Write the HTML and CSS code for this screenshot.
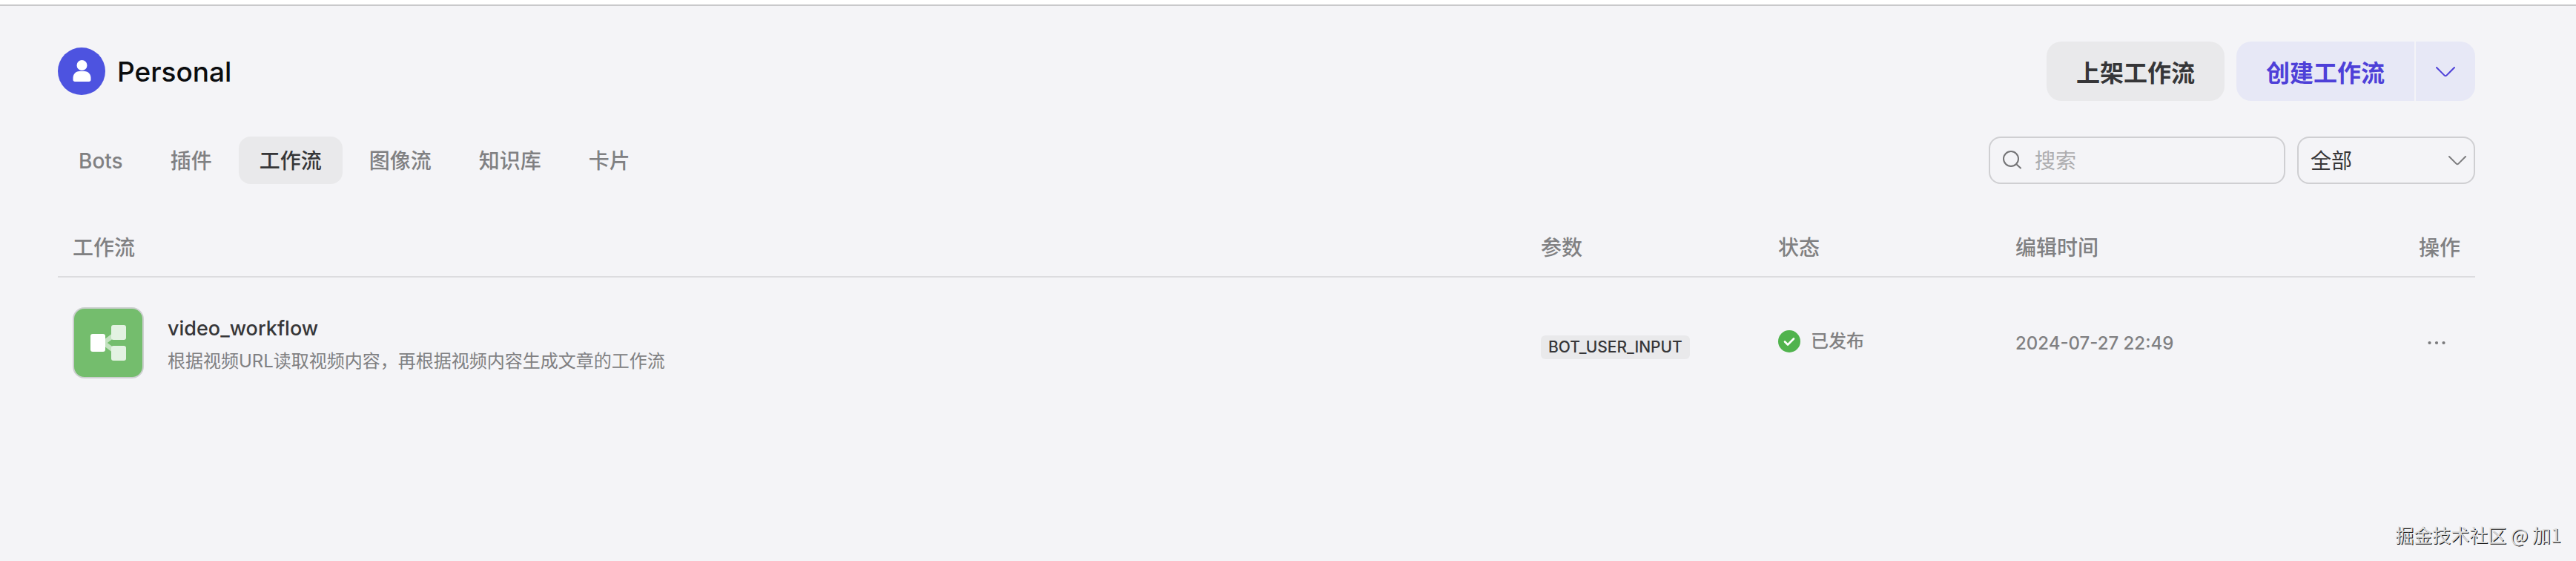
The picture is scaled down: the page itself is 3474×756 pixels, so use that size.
FILE: index.html
```html
<!DOCTYPE html>
<html lang="zh-CN">
<head>
<meta charset="utf-8">
<title>Personal - 工作流</title>
<link rel="stylesheet" href="styles.css">
</head>
<body>
<main class="page">
  <header class="header">
    <div class="space">
      <svg class="avatar" viewBox="0 0 64 64" aria-hidden="true">
        <circle cx="32" cy="32" r="32" fill="#4d53e0"/>
        <circle cx="32.500" cy="24" r="7" fill="#fff"/>
        <path d="M20.500 41c0-5 3.500-9 8.500-9h7c5 0 8.500 4 8.500 9v2.500c0 1.500-1 2.500-2.500 2.500h-19c-1.500 0-2.500-1-2.500-2.500z" fill="#fff"/>
      </svg>
      <h1 class="title">Personal</h1>
    </div>
    <div class="actions">
      <button class="btn btn-gray" type="button">上架工作流</button>
      <div class="split">
        <button class="btn btn-brand" type="button">创建工作流</button>
        <button class="btn btn-brand btn-more" type="button" aria-label="更多">
          <svg class="chevron" viewBox="0 0 32 32" aria-hidden="true"><path d="M4 11l10.600 10.600a2 2 0 0 0 2.800 0L28 11"/></svg>
        </button>
      </div>
    </div>
  </header>

  <div class="toolbar">
    <nav class="tabs">
      <a class="tab" href="#bots">Bots</a>
      <a class="tab" href="#plugins">插件</a>
      <a class="tab tab-active" href="#workflow" aria-current="page">工作流</a>
      <a class="tab" href="#imageflow">图像流</a>
      <a class="tab" href="#knowledge">知识库</a>
      <a class="tab" href="#cards">卡片</a>
    </nav>
    <div class="filters">
      <label class="search">
        <svg class="search-icon" viewBox="0 0 32 32" aria-hidden="true"><circle cx="14" cy="14" r="10"/><path d="M21.500 21.500l5.500 5"/></svg>
        <input class="search-input" type="search" placeholder="搜索" aria-label="搜索">
      </label>
      <div class="select">
        <select class="select-input" aria-label="状态筛选"><option>全部</option></select>
        <svg class="select-arrow" viewBox="0 0 32 32" aria-hidden="true"><path d="M5 11l9.600 9.600a2 2 0 0 0 2.800 0L27 11"/></svg>
      </div>
    </div>
  </div>

  <table class="table">
    <colgroup>
      <col><col class="col-side"><col class="col-side"><col class="col-side"><col class="col-side">
    </colgroup>
    <thead>
      <tr><th>工作流</th><th>参数</th><th>状态</th><th>编辑时间</th><th class="op">操作</th></tr>
    </thead>
    <tbody>
      <tr>
        <td>
          <div class="flow">
            <svg class="flow-icon" viewBox="0 0 96 96" aria-hidden="true">
              <rect x="1" y="1" width="94" height="94" rx="15" fill="#74bd6d" stroke="#cdd0d0" stroke-width="2"/>
              <path d="M43 47l16-12M43 49l16 12" stroke="#c3e2c0" stroke-width="6" fill="none"/>
              <rect x="52" y="24" width="20" height="20" rx="3" fill="#e3f2e2"/>
              <rect x="52" y="52" width="20" height="20" rx="3" fill="#e3f2e2"/>
              <rect x="24" y="36" width="20" height="24" rx="3" fill="#fff"/>
            </svg>
            <div class="flow-text">
              <span class="flow-name">video_workflow</span>
              <span class="flow-desc">根据视频URL读取视频内容，再根据视频内容生成文章的工作流</span>
            </div>
          </div>
        </td>
        <td><div class="param"><span class="tag">BOT_USER_INPUT</span></div></td>
        <td>
          <div class="status">
            <svg class="status-icon" viewBox="0 0 30 30" aria-hidden="true"><circle cx="15" cy="15" r="15" fill="#50b34d"/><path d="M9 15.500l4 4L21 11.500" fill="none" stroke="#fff" stroke-width="2.600" stroke-linecap="round" stroke-linejoin="round"/></svg>
            <span>已发布</span>
          </div>
        </td>
        <td class="time">2024-07-27 22:49</td>
        <td>
          <button class="dots" type="button" aria-label="操作">
            <svg class="dots-icon" viewBox="0 0 32 32" aria-hidden="true"><circle cx="6.500" cy="16" r="2.100"/><circle cx="16" cy="16" r="2.100"/><circle cx="25.500" cy="16" r="2.100"/></svg>
          </button>
        </td>
      </tr>
    </tbody>
  </table>
  <footer class="watermark">掘金技术社区 @ 加1</footer>
</main>
</body>
</html>
```
FILE: styles.css
```css
* { box-sizing: border-box; }
body {
  margin: 0;
  background: #f4f4f7;
  color: #363638;
  font-family: Inter, "Noto Sans CJK SC", sans-serif;
  font-size: 28px;
}
button, input, select { font: inherit; color: inherit; margin: 0; }
.page {
  display: flex;
  flex-direction: column;
  min-height: 100vh;
  padding: 48px 136px 0 78px;
  border-top: 6px solid #fff;
  box-shadow: inset 0 2px #c9c9cb;
}
.header, .toolbar { display: flex; align-items: center; justify-content: space-between; }
.header { padding-top: 2px; }
.space, .actions, .filters { display: flex; align-items: center; gap: 16px; }
.avatar { width: 64px; height: 64px; }
.title { margin: 0; padding-top: 2px; color: #0b0c0e; font-size: 37px; font-weight: 500; line-height: 48px; }
.btn { height: 80px; padding: 0 40px; border: 0; font-size: 32px; font-weight: 600; white-space: nowrap; }
.btn-gray { border-radius: 20px; background: #e9e9eb; }
.split { display: flex; gap: 2px; overflow: hidden; border-radius: 20px; }
.btn-brand { background: #e7e8f6; color: #4e40d8; }
.btn-more { display: flex; align-items: center; padding: 0 24px; }
.chevron, .select-arrow, .search-icon {
  width: 32px;
  height: 32px;
  fill: none;
  stroke: currentColor;
  stroke-width: 2;
  stroke-linecap: round;
}
.toolbar { margin-top: 48px; }
.tabs { display: flex; gap: 8px; }
.tab {
  padding: 2px 28px 0;
  border-radius: 16px;
  color: #808082;
  font-weight: 500;
  line-height: 62px;
  text-decoration: none;
  white-space: nowrap;
}
.tab-active { background: #e9e9eb; color: #363638; }
.search {
  display: flex;
  align-items: center;
  gap: 14px;
  width: 400px;
  height: 64px;
  padding: 0 14px;
  border: 2px solid #cfcfd2;
  border-radius: 16px;
}
.search-icon { flex: none; color: #747476; }
.search-input { flex: 1; min-width: 0; padding: 2px 0 0; border: 0; outline: 0; background: none; }
.search-input::placeholder { color: #adadaf; opacity: 1; }
.select { display: grid; align-items: center; width: 240px; height: 64px; }
.select-input {
  grid-area: 1 / 1;
  width: 100%;
  height: 64px;
  padding: 2px 16px 0;
  border: 2px solid #cfcfd2;
  border-radius: 16px;
  appearance: none;
  background: none;
}
.select-arrow { grid-area: 1 / 1; justify-self: end; margin-right: 8px; color: #7c7c7e; pointer-events: none; }
.table { width: 100%; margin-top: 48px; border-collapse: separate; border-spacing: 0; table-layout: fixed; }
.col-side { width: 320px; }
th {
  padding: 16px 20px;
  border-bottom: 2px solid #dcdcdf;
  color: #808082;
  font-weight: 500;
  line-height: 44px;
  text-align: left;
}
.op { text-align: right; }
td { height: 176px; padding: 0 20px; vertical-align: middle; color: #808082; font-size: 24px; }
.flow { display: flex; align-items: center; gap: 32px; }
.flow-icon { flex: none; width: 96px; height: 96px; }
.flow-text { display: flex; flex-direction: column; gap: 4px; padding-top: 2px; }
.flow-name { color: #363638; font-size: 27px; font-weight: 500; line-height: 44px; }
.flow-desc { line-height: 36px; }
.param { display: flex; padding-top: 12px; }
.tag { padding: 0 10px; border-radius: 6px; background: #e9e9eb; color: #363638; font-size: 21px; font-weight: 500; line-height: 32px; }
.status { display: flex; align-items: center; gap: 14px; padding-bottom: 4px; font-weight: 500; line-height: 36px; }
.status-icon { width: 30px; height: 30px; }
.time { font-weight: 500; }
.dots { display: flex; align-items: center; justify-content: center; width: 64px; height: 64px; margin-left: auto; padding: 0; border: 0; background: none; }
.dots-icon { width: 32px; height: 32px; fill: #7a7a7c; }
.watermark {
  margin: auto -116px 18px auto;
  color: #dcdcdc;
  font-family: "Noto Sans CJK SC", sans-serif;
  font-size: 25px;
  line-height: 36px;
  text-shadow: 1px 1px #111;
}
```
